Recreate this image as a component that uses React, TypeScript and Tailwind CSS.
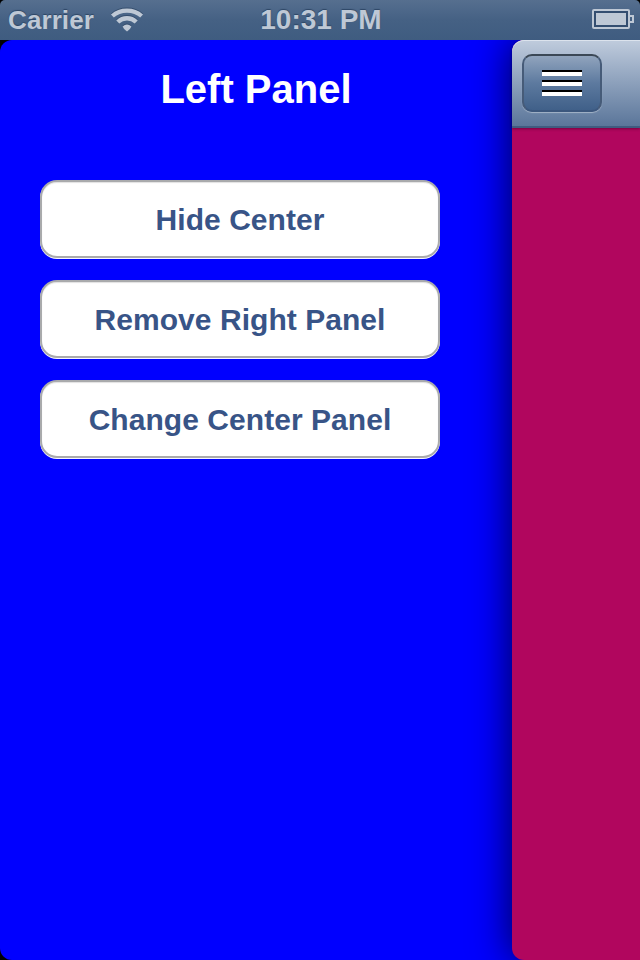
import React from "react";

function StatusBar() {
  return (
    <header className="grid h-10 grid-cols-[1fr_auto_1fr] items-center overflow-hidden rounded-t-[5px] bg-linear-to-b from-[#566f8f] via-[#456184] to-[#3f5c80] pl-2 pr-1.5 font-bold text-[#bec8d5] [text-shadow:0_-1px_1px_#2e4665]">
      <div className="flex items-center gap-4">
        <span className="text-[26px] leading-10 tracking-[0.1px]">Carrier</span>
        <svg width="34" height="26" viewBox="0 0 34 26" className="drop-shadow-[0_-1px_0_#344d6d]">
          <path d="M2.4 9C10.4 1.8 23.6 1.8 31.6 9" fill="none" stroke="currentColor" strokeWidth="4.2" />
          <path d="M7.8 15C13 10 21 10 26.2 15" fill="none" stroke="currentColor" strokeWidth="4.4" />
          <path d="M12.6 19.4Q17 15.6 21.4 19.4Q20.4 22.2 17 24.4Q13.6 22.2 12.6 19.4Z" fill="currentColor" />
        </svg>
      </div>
      <span className="text-[28px] leading-10">10:31 PM</span>
      <svg width="44" height="24" viewBox="0 0 44 24" className="justify-self-end">
        <rect x="3" y="2" width="36" height="18" rx="1" fill="#344e70" stroke="#bec8d5" strokeWidth="2" />
        <rect x="6" y="5" width="30" height="12" fill="#bec8d5" />
        <path d="M40 8h3v6h-3" fill="none" stroke="#bec8d5" strokeWidth="2" />
      </svg>
    </header>
  );
}

function PanelButton({ label }: { label: string }) {
  return (
    <button className="h-[78px] w-[400px] rounded-[17px] border-2 border-[#a9aaac] bg-white text-[30px] font-bold tracking-[0.05px] text-[#385487] shadow-[0_1px_0_#f4f4ff,inset_0_1px_1px_#e2e2e2]">
      {label}
    </button>
  );
}

export default function App() {
  return (
    <div className="flex h-[960px] w-[640px] flex-col overflow-hidden bg-black font-['Liberation_Sans',Arial,sans-serif]">
      <StatusBar />
      <main className="flex h-[920px] overflow-hidden rounded-l-[12px] bg-[#0000ff]">
        <section className="w-[512px] shrink-0 pt-[26px]">
          <h1 className="text-center text-[40px] font-bold leading-[46px] text-white">Left Panel</h1>
          <div className="ml-10 mt-[68px] flex flex-col gap-[22px]">
            <PanelButton label="Hide Center" />
            <PanelButton label="Remove Right Panel" />
            <PanelButton label="Change Center Panel" />
          </div>
        </section>
        <aside className="w-[128px] shrink-0 rounded-l-[12px] bg-[#b1065e] shadow-[0_0_40px_rgba(0,0,0,0.72)]">
          <nav className="h-[88px] rounded-tl-[12px] border-b-2 border-[#405c80] bg-linear-to-b from-[#c0ccdd] to-[#5b769a] px-2.5 pt-3.5 shadow-[inset_0_1px_0_#dce3ed,0_1px_3px_rgba(0,0,0,0.35)]">
            <button
              aria-label="Menu"
              className="flex h-[58px] w-20 flex-col items-center gap-1 rounded-[10px] border-2 border-t-[#3b4856] border-x-[#465b78] border-b-[#3c577d] bg-linear-to-b from-[#91a4bd] via-[#5d7a9f] to-[#406089] pt-3.5 shadow-[0_1px_1px_#a5b4c8]"
            >
              <span className="h-1.5 w-10 border-t-2 border-black bg-white" />
              <span className="h-1.5 w-10 border-t-2 border-black bg-white" />
              <span className="h-1.5 w-10 border-t-2 border-black bg-white" />
            </button>
          </nav>
        </aside>
      </main>
    </div>
  );
}
